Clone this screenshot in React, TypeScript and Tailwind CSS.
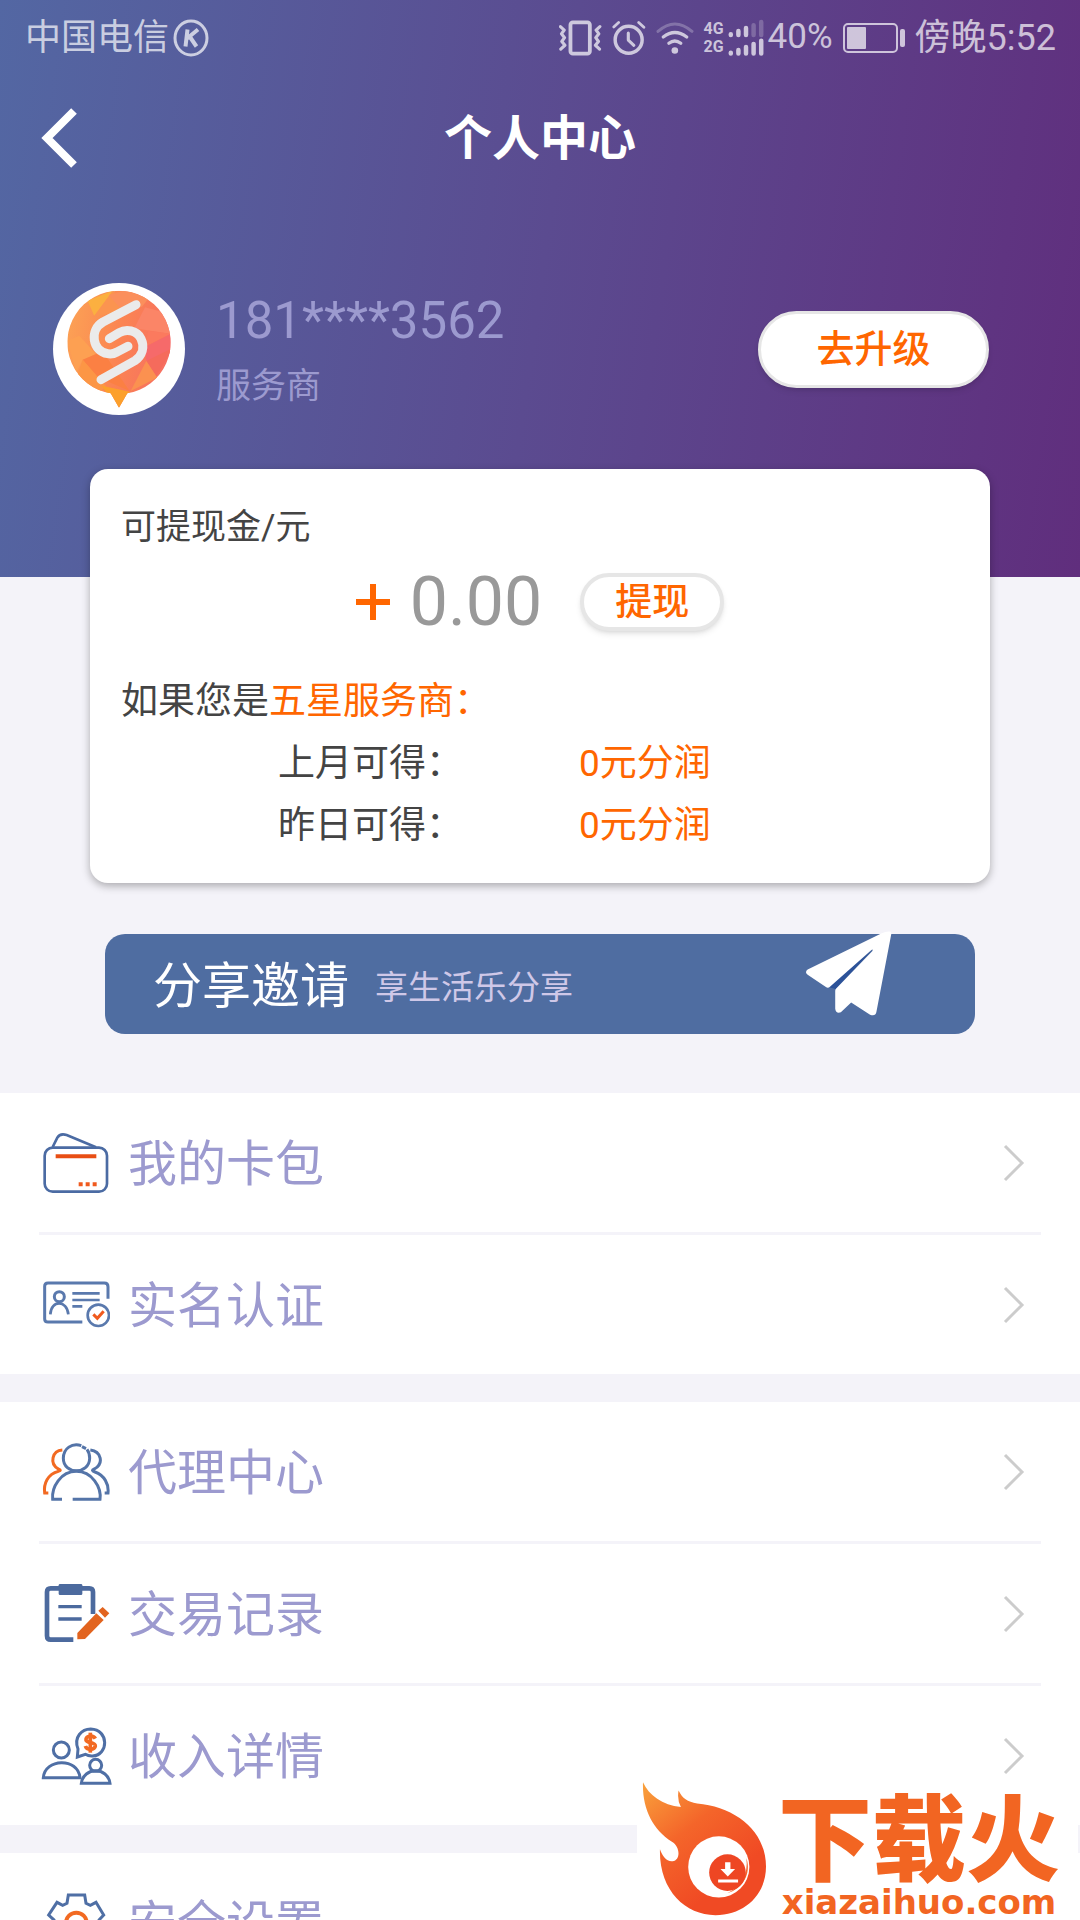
import type { ReactNode } from "react";

function StatusBar() {
  return (
    <div className="flex h-[76px] items-center justify-between pr-6 pl-[25px] text-[36px] leading-none text-white/70">
      <div className="flex items-center gap-1">
        <span>中国电信</span>
        <svg viewBox="0 0 36 38" className="h-[38px] w-9" fill="none" stroke="currentColor">
          <ellipse cx="18" cy="19" rx="16" ry="17" strokeWidth="3" />
          <path d="M14.5 10.500 12.500 27.500M25 10.500 14 19.500M17 18 23.500 27.500" strokeWidth="4" />
        </svg>
      </div>
      <div className="flex items-center gap-[10px]">
        <svg viewBox="55 57 124 104" className="h-9 w-[43px]" fill="none" stroke="currentColor" strokeLinecap="round" strokeLinejoin="round">
          <rect x="88" y="64" width="56" height="90" rx="7" strokeWidth="11" />
          <path d="m59 76 11 10-8 11 9 11-8 11 9 11-12 11M173 76l-11 10 8 11-9 11 8 11-9 11 12 11" strokeWidth="9" />
        </svg>
        <svg viewBox="212 57 98 104" className="h-9 w-[34px]" fill="none" stroke="currentColor" strokeLinecap="round" strokeLinejoin="round">
          <circle cx="260" cy="114" r="39" strokeWidth="10" />
          <path d="M259 95v20l16 15" strokeWidth="9" />
          <path d="m217 77 14-13M289 64l15 14" strokeWidth="8" />
        </svg>
        <svg viewBox="335 52 115 108" className="h-9 w-[38px]" fill="none" stroke="currentColor" strokeLinecap="round">
          <path d="M341 86q51-45 103 0" strokeWidth="9" className="opacity-35" />
          <path d="M357 103q35-27 71 0M374 122q18-14 36 0" strokeWidth="10" />
          <circle cx="392" cy="144" r="10" fill="currentColor" stroke="none" />
        </svg>
        <div className="flex items-center gap-1">
          <div className="flex flex-col text-[16px] leading-[18px] font-bold">
            <span>4G</span>
            <span>2G</span>
          </div>
          <svg viewBox="542 50 104 110" className="h-[38px] w-9" fill="none" stroke="currentColor" strokeWidth="13" strokeLinecap="round">
            <path d="M550 94v2M572 85v11M594 76v20" />
            <path d="M616 68v28M638 59v37" className="opacity-30" />
            <path d="M550 148v2M572 140v10M594 131v19M616 122v28M638 113v37" />
          </svg>
          <span className="pb-1 text-[35px]">40%</span>
        </div>
        <svg viewBox="0 0 62 30" className="h-[30px] w-[62px]" fill="none">
          <rect x="1" y="1" width="53" height="28" rx="4" stroke="currentColor" strokeWidth="2" />
          <rect x="4" y="4" width="19" height="22" rx="1" fill="currentColor" />
          <rect x="57" y="6" width="5" height="18" rx="2" fill="currentColor" />
        </svg>
        <span>傍晚5:52</span>
      </div>
    </div>
  );
}

function Avatar() {
  return (
    <div className="size-[132px] shrink-0 overflow-hidden rounded-full bg-white">
      <svg viewBox="69 67 396 396" className="size-full">
        <defs>
          <clipPath id="pin">
            <path d="M242 398a155 155 0 1 1 50 0l-25 43z" />
          </clipPath>
          <linearGradient id="pinFill" x1="0" y1="0.3" x2="1" y2="0.5">
            <stop offset="0" stopColor="#fca355" />
            <stop offset="0.5" stopColor="#fb8452" />
            <stop offset="1" stopColor="#f66c64" />
          </linearGradient>
        </defs>
        <g clipPath="url(#pin)">
          <path d="M100 80h340v370H100z" fill="url(#pinFill)" />
          <path d="m173 120 77-31-57 77z" fill="#fbb040" />
          <path d="m250 89-60 80 90-20z" fill="#fb9450" />
          <path d="m236 104 50-15 70 24-20 25-60 10z" fill="#fb8f5c" />
          <path d="m345 140 75 20 3 60-110-17z" fill="#fb8567" />
          <path d="m355 210 68 9-80 41z" fill="#fb7a5e" />
          <path d="m423 219 5 65-79 17-6-41z" fill="#f66a6a" />
          <path d="m349 301 80-40-50 86z" fill="#f56b5c" />
          <path d="m349 301 33 50-80 40z" fill="#fb9150" />
          <path d="m113 240 35-15 50 55-40 17-20 40z" fill="#fda052" />
          <path d="m158 297 60-25 80 118-95-40z" fill="#fb8043" />
          <path d="m158 297 70 80-20 20-70-40z" fill="#fc9645" />
          <path d="m215 375 85 18-33 50-40-50z" fill="#fca02c" />
        </g>
        <path
          d="m318 132-99 52c-42 24-32 88 14 95q14 3 28-5l33-17M238 234l30-18c20-12 52-8 65 18 12 25 4 50-18 66l-102 57"
          fill="none"
          stroke="#ebebeb"
          strokeWidth="27"
          strokeLinecap="round"
          strokeLinejoin="round"
        />
      </svg>
    </div>
  );
}

function Profile() {
  return (
    <div className="flex items-center justify-between pt-[83px] pr-[91px] pl-[53px]">
      <div className="flex items-center gap-[31px]">
        <Avatar />
        <div className="pt-1.5 text-[#9c9acf]">
          <div className="text-[51px] leading-[62px]">181****3562</div>
          <div className="mt-2 text-[35px] leading-[54px]">服务商</div>
        </div>
      </div>
      <button
        type="button"
        className="h-[77px] w-[231px] rounded-full border-[3px] border-[#e6e6e6] bg-white text-[38px] leading-none font-medium text-[#ff6600] shadow-md"
      >
        去升级
      </button>
    </div>
  );
}

const profits = [
  { label: "上月可得：", value: "0元分润" },
  { label: "昨日可得：", value: "0元分润" },
];

function BalanceCard() {
  return (
    <section className="relative mx-[90px] -mt-[108px] rounded-[18px] bg-white px-[31px] pt-[29px] pb-[26px] text-[#444] shadow-[0_3px_8px_rgba(0,0,0,0.3)]">
      <h2 className="text-[35px] leading-[60px]">可提现金/元</h2>
      <div className="flex h-[88px] items-center justify-center">
        <svg viewBox="0 0 34 36" className="mr-5 h-9 w-[34px]" stroke="#ff6600" strokeWidth="6">
          <path d="M17 0v36M0 18h34" />
        </svg>
        <span className="mr-[38px] text-[68px] leading-none text-[#999]">0.00</span>
        <button
          type="button"
          className="h-[58px] w-36 rounded-full border-4 border-[#e6e6e6] bg-white text-[37px] leading-none font-medium text-[#ff6600] shadow-md"
        >
          提现
        </button>
      </div>
      <div className="mt-[25px] text-[37px] leading-[62px]">
        <p>
          如果您是<span className="text-[#ff6600]">五星服务商：</span>
        </p>
        {profits.map((p) => (
          <div key={p.label} className="flex pl-[157px]">
            <span className="w-[301px]">{p.label}</span>
            <span className="text-[#ff6600]">{p.value}</span>
          </div>
        ))}
      </div>
    </section>
  );
}

function InviteBanner() {
  return (
    <button
      type="button"
      className="relative mx-[105px] mt-[51px] mb-[59px] flex h-[100px] items-center rounded-[20px] bg-[#4f6da1] pl-12 text-left"
    >
      <span className="pt-1 text-[49px] leading-none text-white">分享邀请</span>
      <span className="ml-[26px] pt-1.5 text-[33px] leading-none text-[#cfc8e8]">享生活乐分享</span>
      <svg viewBox="72 58 266 262" className="absolute right-[82px] bottom-[17px] h-[87px] w-[89px]">
        <path d="m277 118-134 112 24 6z" fill="#2c5299" />
        <path
          d="M333 63q-14-2-28 5L82 177q-10 8 0 16l55 37q7 4 13-2l124-110q6-3 3 3L168 234q-3 3-3 7v54q2 16 17 11l31-30 57 37q16 6 19-8l45-236z"
          fill="#fff"
        />
      </svg>
    </button>
  );
}

function CardIcon() {
  return (
    <svg viewBox="66 55 204 204" className="size-[68px]" fill="none" stroke="#4b6ba3" strokeWidth="8">
      <rect x="74" y="111" width="187" height="132" rx="24" />
      <path d="m98 109 14-28q8-14 28-8l88 37" />
      <path d="M107 137h122" stroke="#e84e14" strokeWidth="12" />
      <path d="M176 221h12M197 221h12M218 221h12" stroke="#f05a1e" strokeWidth="12" />
    </svg>
  );
}

function IdIcon() {
  return (
    <svg viewBox="66 481 204 204" className="size-[68px]" fill="none" stroke="#5a79ad" strokeWidth="9">
      <path d="M264 564v-36q0-11-11-11H84q-10 0-10 10v98q0 9 10 9h103" />
      <circle cx="118" cy="558" r="15" />
      <path d="M91 611c2-44 50-44 54 0M157 548h82M157 568h82M157 587h30" strokeWidth="8" />
      <circle cx="235" cy="614" r="32" strokeWidth="8" />
      <path d="m220 611 12 12 19-21" stroke="#f05a1e" />
    </svg>
  );
}

function AgentIcon() {
  return (
    <svg viewBox="66 112 204 204" className="size-[68px]" fill="none" stroke="#5474a8" strokeWidth="9">
      <path d="M127 148c-30 2-40 40-12 57q12 4 0 7c-32 8-45 38-41 65h11" stroke="#f26a22" />
      <path d="M211 148c32 4 42 40 12 57q-12 4 2 9c28 10 42 36 39 63h-10" />
      <path d="M184 135c-28-9-54 8-54 38 0 50 78 50 79 0q0-16-8-27M186 138l12 6" />
      <path d="M126 296H98c-4-36 24-84 71-84s76 48 71 84h-82" />
    </svg>
  );
}

function RecordIcon() {
  return (
    <svg viewBox="66 538 204 204" className="size-[68px]" fill="none" stroke="#4c6a9e" strokeWidth="14">
      <path d="M219 640v-66q0-11-11-11H92q-11 0-11 11v131q0 12 11 12h68" />
      <rect x="116" y="550" width="71" height="33" rx="4" fill="#4c6a9e" stroke="none" />
      <path d="M115 618h70M115 655h70" strokeWidth="10" />
      <path d="m172 697 57-59 22 20-56 57-23 1zM235 630l13-11 20 19-13 13z" fill="#e2641f" stroke="none" />
    </svg>
  );
}

function IncomeIcon() {
  return (
    <svg viewBox="66 94 204 204" className="size-[68px] overflow-visible" fill="none" stroke="#4f6fa5" strokeWidth="9">
      <circle cx="124" cy="178" r="24" />
      <path d="M70 261c4-58 104-62 110 0z" />
      <circle cx="227" cy="224" r="18" />
      <path d="M184 278c6-50 80-50 86 0z" />
      <path d="m172 199 2-24c-14-36 12-60 38-60 56 2 54 78 6 81q-12 1-22-5z" />
      <g stroke="#f26a22" strokeWidth="11">
        <path d="M226 144c-6-12-30-9-28 4 2 9 29 7 28 18-2 13-26 13-30 0" />
        <path d="M211 126v60" />
      </g>
    </svg>
  );
}

function GearIcon() {
  return (
    <svg viewBox="66 595 204 204" className="size-[68px]" fill="none" stroke="#4f6fa5" strokeWidth="9">
      <path d="M145 613h49l4 25 13 6 17-9 23 38-14 15v18l14 15-23 38-17-9-13 6-4 25h-49l-4-25-13-6-17 9-25-38 16-15v-18l-16-15 25-38 17 9 13-6z" />
      <circle cx="169" cy="697" r="31" stroke="#f26a22" strokeWidth="12" />
    </svg>
  );
}

const menu: { label: string; icon: ReactNode }[][] = [
  [
    { label: "我的卡包", icon: <CardIcon /> },
    { label: "实名认证", icon: <IdIcon /> },
  ],
  [
    { label: "代理中心", icon: <AgentIcon /> },
    { label: "交易记录", icon: <RecordIcon /> },
    { label: "收入详情", icon: <IncomeIcon /> },
  ],
  [{ label: "安全设置", icon: <GearIcon /> }],
];

function Menu() {
  return (
    <nav className="flex flex-col gap-7">
      {menu.map((group, i) => (
        <ul key={i} className="divide-y-[3px] divide-[#f4f3f9] bg-white px-[39px]">
          {group.map((item) => (
            <li key={item.label}>
              <a href="#" className="flex h-[139px] items-center pr-4 pl-[3px]">
                {item.icon}
                <span className="ml-[18px] flex-1 pt-1 text-[49px] leading-none text-[#9c9acf]">{item.label}</span>
                <svg viewBox="0 0 22 38" className="h-[38px] w-[22px]" fill="none" stroke="#ccc" strokeWidth="3">
                  <path d="m2 2 17 17L2 36" />
                </svg>
              </a>
            </li>
          ))}
        </ul>
      ))}
    </nav>
  );
}

function Watermark() {
  return (
    <div className="absolute right-[2px] bottom-0 flex h-[141px] w-[441px] bg-white pl-[3px]">
      <svg viewBox="60 25 385 420" className="h-[140px] w-32 shrink-0">
        <defs>
          <linearGradient id="flame" x1="0" y1="0" x2="0.6" y2="0.8">
            <stop offset="0" stopColor="#f9a23c" />
            <stop offset="0.5" stopColor="#f4652a" />
            <stop offset="1" stopColor="#f04a24" />
          </linearGradient>
        </defs>
        <path
          d="M69 34c18 40 58 68 114 75q-12-22-7-50c12 24 26 34 56 39 112 10 207 80 207 190 0 86-66 146-152 146-92 0-170-76-167-198 8 22 20 38 38 36 24-2 24-44-2-59C98 177 66 112 69 34z"
          fill="url(#flame)"
        />
        <circle cx="297" cy="289" r="92" fill="#fff" />
        <path d="M380 262c16 48-12 94-58 106 44-20 64-58 58-106z" fill="#f4652a" />
        <circle cx="323" cy="306" r="55" fill="#ee4623" />
        <path d="M316 275h16v20h14l-22 23-22-23h14zM295 327h60v9h-60z" fill="#fff" />
      </svg>
      <div className="flex flex-1 flex-col items-center pr-2 text-[#f26522]">
        <span className="pt-[18px] text-[94px] leading-[90px] font-black">下载火</span>
        <span className="font-['DejaVu_Sans'] text-[34px] leading-[30px] font-bold">xiazaihuo.com</span>
      </div>
    </div>
  );
}

export default function App() {
  return (
    <div lang="zh-CN" className="relative h-screen overflow-hidden bg-[#f4f3f9] font-[Roboto,'Noto_Sans_CJK_SC',sans-serif]">
      <header className="bg-linear-[98deg,#5367a3,#5b4b90_50%,#602e7d] pb-[162px]">
        <StatusBar />
        <div className="grid h-[124px] grid-cols-[1fr_auto_1fr] items-center">
          <button type="button" aria-label="返回" className="ml-10 w-fit">
            <svg viewBox="0 0 38 60" className="h-[60px] w-[38px]" fill="none" stroke="#fff" strokeWidth="8">
              <path d="M34 3 7 30l27 27" />
            </svg>
          </button>
          <h1 className="pt-0.5 text-[48px] leading-none font-bold text-white">个人中心</h1>
        </div>
        <Profile />
      </header>
      <main className="flex flex-col">
        <BalanceCard />
        <InviteBanner />
        <Menu />
      </main>
      <Watermark />
    </div>
  );
}
